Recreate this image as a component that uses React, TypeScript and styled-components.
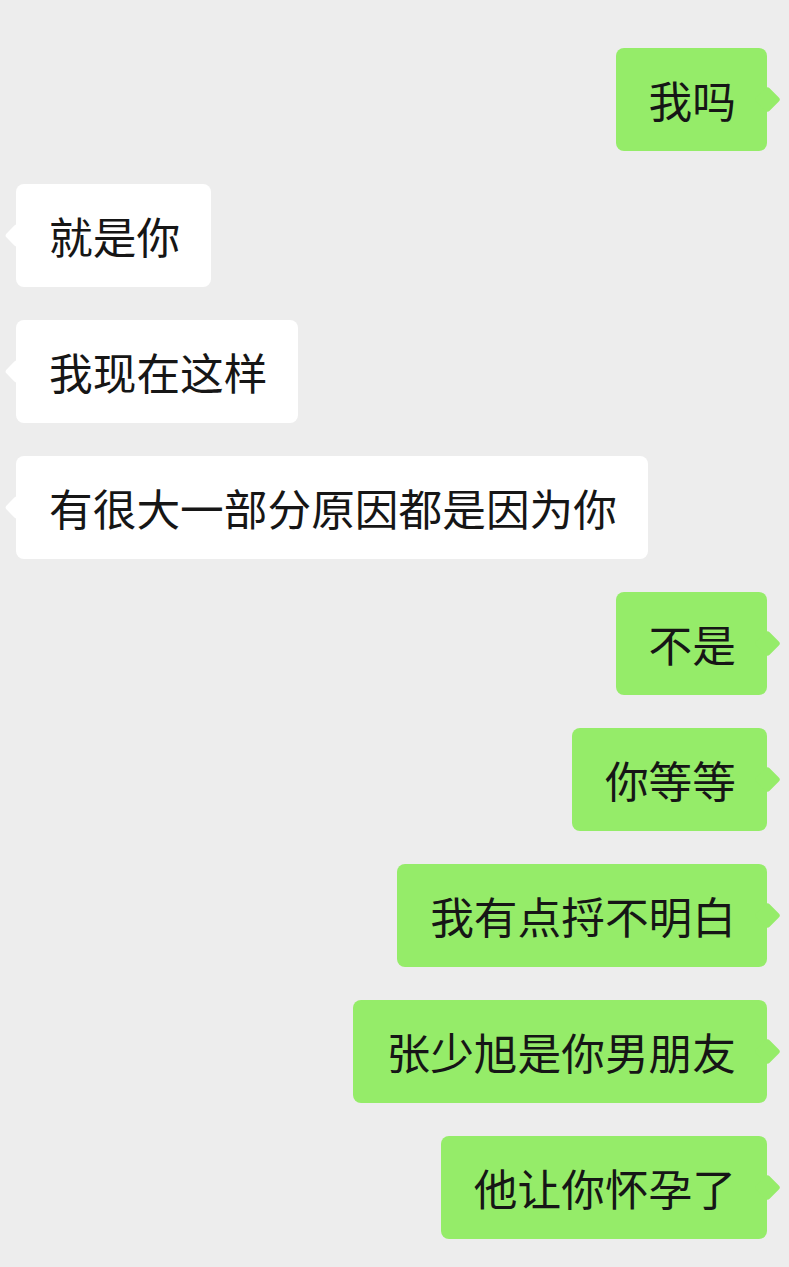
import React from "react";
import styled, { createGlobalStyle } from "styled-components";

const GlobalStyle = createGlobalStyle`
  html, body {
    margin: 0;
    padding: 0;
    background: #ededed;
    overflow: hidden;
  }
  body {
    font-family: "Noto Sans CJK SC", "Noto Sans", sans-serif;
  }
`;

const Chat = styled.div`
  display: flex;
  flex-direction: column;
  gap: 33px;
  padding: 48px 22px 28px 16px;
  min-height: 1267px;
  box-sizing: border-box;
  background: #ededed;
`;

const Row = styled.div<{ $mine: boolean }>`
  display: flex;
  justify-content: ${(p) => (p.$mine ? "flex-end" : "flex-start")};
`;

const Bubble = styled.div<{ $mine: boolean }>`
  position: relative;
  box-sizing: border-box;
  height: 103px;
  padding: 0 31px 0 33px;
  display: flex;
  align-items: center;
  border-radius: 8px;
  background: ${(p) => (p.$mine ? "#95ec69" : "#ffffff")};
  color: #161616;
  font-family: "Noto Sans CJK SC", sans-serif;
  font-size: 43.7px;
  line-height: 1;
  white-space: nowrap;

  &::before {
    content: "";
    position: absolute;
    top: 50%;
    ${(p) =>
      p.$mine
        ? "right: -9.5px; width: 19px; height: 19px; margin-top: -9.5px;"
        : "left: -8.5px; width: 17px; height: 17px; margin-top: -8.5px;"}
    background: inherit;
    border-radius: 3px;
    transform: rotate(45deg);
  }
`;

const Text = styled.span`
  position: relative;
`;

const messages: { mine: boolean; text: string }[] = [
  { mine: true, text: "我吗" },
  { mine: false, text: "就是你" },
  { mine: false, text: "我现在这样" },
  { mine: false, text: "有很大一部分原因都是因为你" },
  { mine: true, text: "不是" },
  { mine: true, text: "你等等" },
  { mine: true, text: "我有点捋不明白" },
  { mine: true, text: "张少旭是你男朋友" },
  { mine: true, text: "他让你怀孕了" },
];

export default function App() {
  return (
    <>
      <GlobalStyle />
      <Chat>
        {messages.map((m, i) => (
          <Row key={i} $mine={m.mine}>
            <Bubble $mine={m.mine}>
              <Text>{m.text}</Text>
            </Bubble>
          </Row>
        ))}
      </Chat>
    </>
  );
}
